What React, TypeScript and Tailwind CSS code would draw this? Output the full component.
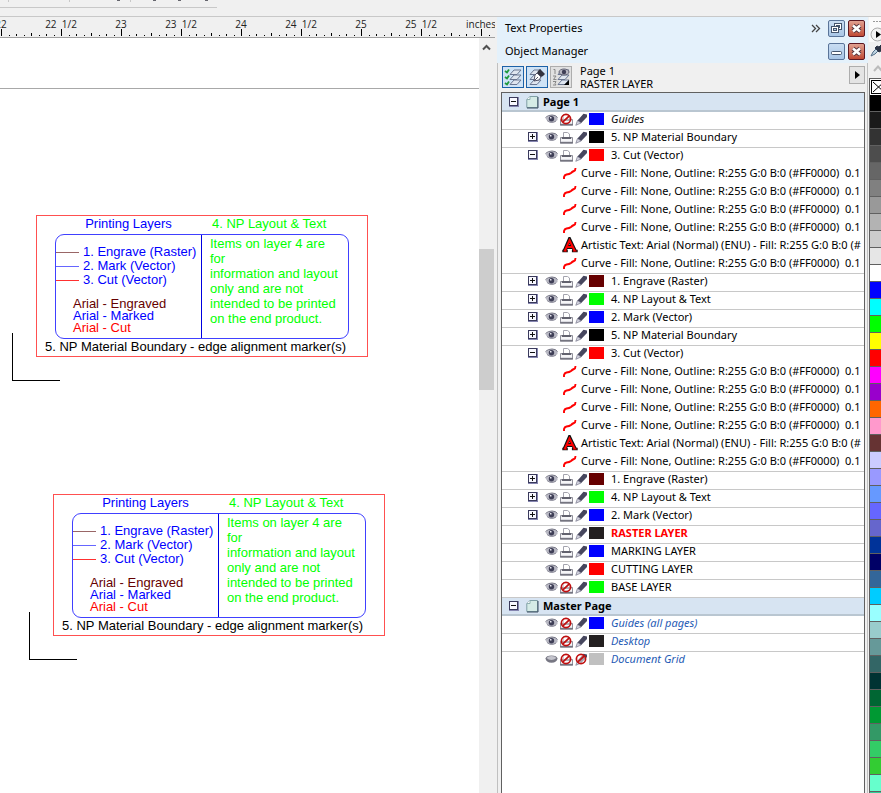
import React from "react";

type LayerRow = {
  kind: "layer";
  name: string;
  color: string;
  expander?: "plus" | "minus";
  hidden?: boolean;
  noPrint?: boolean;
  locked?: boolean;
  tone?: "guide" | "active" | "master";
  line?: boolean;
};
type ObjectRow = { kind: "curve" | "text"; name: string; line?: boolean };
type PageRow = { kind: "page"; name: string };
type Row = LayerRow | ObjectRow | PageRow;

const curveName = "Curve - Fill: None, Outline: R:255 G:0 B:0 (#FF0000)  0.1";
const textName = "Artistic Text: Arial (Normal) (ENU) - Fill: R:255 G:0 B:0 (#";

const curve: ObjectRow = { kind: "curve", name: curveName };
const plateLayers: Row[] = [
  { kind: "layer", name: "5. NP Material Boundary", color: "#000000", expander: "plus", line: true },
  { kind: "layer", name: "3. Cut (Vector)", color: "#ff0000", expander: "minus" },
  curve,
  curve,
  curve,
  curve,
  { kind: "text", name: textName },
  { ...curve, line: true },
  { kind: "layer", name: "1. Engrave (Raster)", color: "#660000", expander: "plus", line: true },
  { kind: "layer", name: "4. NP Layout & Text", color: "#00ff00", expander: "plus", line: true },
  { kind: "layer", name: "2. Mark (Vector)", color: "#0000ff", expander: "plus", line: true },
];

const rows: Row[] = [
  { kind: "page", name: "Page 1" },
  { kind: "layer", name: "Guides", color: "#0000ff", noPrint: true, tone: "guide", line: true },
  ...plateLayers,
  ...plateLayers,
  { kind: "layer", name: "RASTER LAYER", color: "#231f20", tone: "active", line: true },
  { kind: "layer", name: "MARKING LAYER", color: "#0000ff", line: true },
  { kind: "layer", name: "CUTTING LAYER", color: "#ff0000", line: true },
  { kind: "layer", name: "BASE LAYER", color: "#00ff00", noPrint: true, line: true },
  { kind: "page", name: "Master Page" },
  { kind: "layer", name: "Guides (all pages)", color: "#0000ff", noPrint: true, tone: "master", line: true },
  { kind: "layer", name: "Desktop", color: "#231f20", noPrint: true, tone: "master", line: true },
  { kind: "layer", name: "Document Grid", color: "#c0c0c0", hidden: true, noPrint: true, locked: true, tone: "master" },
];

const palette = [
  "#000000", "#1a1a1a", "#333333", "#4d4d4d", "#666666", "#808080", "#999999", "#b3b3b3", "#cccccc", "#e6e6e6",
  "#ffffff", "#0000ff", "#00ffff", "#00ff00", "#ffff00", "#ff0000", "#ff00ff", "#9900cc", "#ff6600", "#ff99cc",
  "#663333", "#ccccff", "#9999ff", "#6699ff", "#6666ff", "#6666cc", "#003399", "#000066", "#336699", "#00ccff",
  "#99ffff", "#99cccc", "#669999", "#336666", "#003333", "#006633", "#009933", "#339966", "#33cc66", "#33cc33",
  "#66ffcc", "#33cc99",
];

const toneClass = {
  guide: "italic text-[#111]",
  active: "font-bold text-[#f00]",
  master: "italic text-[#1f5bb5]",
};

/* ---------- icons ---------- */

function Eye({ closed }: { closed?: boolean }) {
  return (
    <svg width="13" height="10" viewBox="0 0 13 10">
      {closed ? (
        <>
          <path d="M.5 4.500Q1 1.500 6.500 1.500Q12 1.500 12.500 4.500Q12 8.500 6.500 8.800Q1 8.500 .5 4.500Z" fill="#777783" />
          <path d="M1.500 4Q3 2 6.500 2Q10 2 11.500 4Q9 6 6.500 6Q3.500 6 1.500 4Z" fill="#c4c4cc" />
        </>
      ) : (
        <>
          <path d="M.5 4.500Q3 1 7 1Q11 1 12.500 3.500V6Q10 9 6.500 8.800Q3 8.500 .5 4.500Z" fill="#b9b9c4" />
          <path d="M.5 3.500Q3 1 7 1Q11 1 12.500 3.500" fill="none" stroke="#777786" />
          <path d="M2 6.500Q6.500 10 11 7" fill="none" stroke="#8a8a98" />
          <circle cx="6.500" cy="4.700" r="2.700" fill="#3f3f57" />
          <rect x="5" y="3" width="1.500" height="1.500" fill="#e8e8f0" />
        </>
      )}
    </svg>
  );
}

function Ban() {
  return (
    <>
      <circle cx="6" cy="6" r="4.600" fill="#fff" fillOpacity=".5" stroke="#c01010" strokeWidth="1.700" />
      <path d="M2.900 8.800L9.200 3" stroke="#c01010" strokeWidth="1.700" />
    </>
  );
}

function Printer({ off }: { off?: boolean }) {
  return (
    <svg width="13" height="13" viewBox="0 0 13 13">
      <path d="M3.500 6.500V1.500H7.500L9.500 3V6.500" fill="#fff" stroke="#a4a4ae" />
      <path d="M.5 12V6.500H12.500V12Z" fill="#dcdce2" stroke="#90909a" />
      <rect x="2" y="6" width="9" height="2" fill="#62626e" />
      <rect x="1" y="8" width="11" height="2" fill="#f6f6f8" />
      <rect x="0" y="11" width="13" height="1.500" fill="#757580" />
      {off && <Ban />}
    </svg>
  );
}

function Pencil({ off }: { off?: boolean }) {
  return (
    <svg width="13" height="13" viewBox="0 0 13 13">
      <path d="M8.500 .8L12 1.500V4L6 10.200L2.500 7.500Z" fill="#47475e" />
      <path d="M2.500 7.500L6 10L.8 12.300Z" fill="#d4d4e0" stroke="#77778b" strokeWidth=".7" />
      {off && <Ban />}
    </svg>
  );
}

function PageIcon() {
  return (
    <svg width="13" height="14" viewBox="0 0 13 14">
      <path d="M4 1.500H11.500V12.500H.8V4.500Z" fill="#d5ebe6" stroke="#7f9fa5" />
      <path d="M.8 4.500H4V1.500" fill="#fff" stroke="#8fb0b0" />
      <path d="M12 2V13H1" fill="none" stroke="#3d4d60" />
    </svg>
  );
}

function CurveIcon() {
  return (
    <svg width="14" height="13" viewBox="0 0 14 13">
      <path d="M1 12V10Q1.500 8 3.500 7.500Q6.500 7.300 8 6Q9.500 4.500 11 4Q12.500 3.500 12.500 1" fill="none" stroke="#f00" strokeWidth="1.900" />
    </svg>
  );
}

function LetterIcon() {
  return (
    <svg width="16" height="16" viewBox="0 0 16 16">
      <path d="M2.500 14L7.500 2.500L13 14M4.500 10H11.500" fill="none" stroke="#111" strokeWidth="3.800" />
      <path d="M.3 14H5.800M9.900 14H15.700" stroke="#111" strokeWidth="2.600" />
      <path d="M2.800 14L7.500 3.300L12.800 14M5 10H11" fill="none" stroke="#f00" strokeWidth="2" />
      <path d="M1.500 14H4.800M10.900 14H14.600" stroke="#f00" strokeWidth="1" />
    </svg>
  );
}

function Layers({ x = 5 }: { x?: number }) {
  return (
    <g fill="#dfe6f0" stroke="#6a7691">
      {[13, 8, 3].map((y) => (
        <path key={y} d={`M${x} ${y + 4.5}L${x + 4} ${y}H${x + 11}L${x + 7} ${y + 4.5}Z`} />
      ))}
    </g>
  );
}

function Expander({ state, label }: { state: "plus" | "minus"; label: string }) {
  return (
    <button aria-label={`Toggle ${label}`} className="block h-[10px] w-[10px] shrink-0">
      <svg width="10" height="10" viewBox="0 0 10 10" shapeRendering="crispEdges">
        <rect width="10" height="10" fill="#8585b0" />
        <rect width="9" height="9" fill="#3a3a5c" />
        <rect x="1" y="1" width="7" height="7" fill="#f8f8ff" />
        <rect x="2" y="4" width="5" height="1" fill="#111" />
        {state === "plus" && <rect x="4" y="2" width="1" height="5" fill="#111" />}
      </svg>
    </button>
  );
}

/* ---------- ruler and drawing ---------- */

const rulerLabels = ["22", "22 1/2", "23", "23 1/2", "24", "24 1/2", "25", "25 1/2", "inches"];
const tickOffsets = [
  [0, 7], [8, 1], [15, 2], [23, 1], [30, 3], [38, 1], [45, 2], [53, 1],
];

function Ruler() {
  return (
    <div className="h-[21px] overflow-hidden border-b border-[#a0a0a0] pt-px">
      <div className="-ml-[29px] flex h-[11px] text-[10px] leading-[13px] text-[#222]">
        {rulerLabels.map((l) => (
          <span key={l} className="w-[60px] shrink-0 whitespace-pre text-center">
            {l.replace(" ", "  ")}
          </span>
        ))}
      </div>
      <svg width="495" height="7" className="block" shapeRendering="crispEdges">
        {rulerLabels.map((l, i) =>
          tickOffsets.map(([dx, h]) => (
            <rect key={l + dx} x={1 + i * 60 + dx} y={7 - h} width="1" height={h} fill="#000" />
          ))
        )}
      </svg>
    </div>
  );
}

function Plate({ place, lead }: { place: string; lead: string }) {
  return (
    <div className={`absolute h-[166px] w-[356px] text-[13px] ${place}`}>
      <div className="absolute bottom-0 left-0 h-[48px] w-[48px] border-b border-l border-black" />
      <section className="ml-6 flex h-[142px] flex-col border border-[#ff5050] pl-[18px] pr-[18px]">
        <div className="flex h-[18px] leading-[16px]">
          <h3 className="w-[147px] text-center text-[#00f]">Printing Layers</h3>
          <h3 className="pl-[10px] text-[#0f0]">4. NP Layout &amp; Text</h3>
        </div>
        <div className="flex h-[105px] rounded-[9px] border border-[#4040ff]">
          <div className="w-[146px] border-r border-[#0000e0] pt-[10px]">
            <ul className="leading-[14px] text-[#00f]">
              {[
                ["1. Engrave (Raster)", "bg-[#996666]"],
                ["2. Mark (Vector)", "bg-[#6666ff]"],
                ["3. Cut (Vector)", lead],
              ].map(([t, c]) => (
                <li key={t} className="flex items-center gap-1 whitespace-nowrap">
                  <span className={`h-px w-[23px] shrink-0 ${c}`} />
                  {t}
                </li>
              ))}
            </ul>
            <ul className="pl-[17px] pt-[11px] leading-[12px]">
              <li className="text-[#660000]">Arial - Engraved</li>
              <li className="text-[#00f]">Arial - Marked</li>
              <li className="text-[#f00]">Arial - Cut</li>
            </ul>
          </div>
          <p className="whitespace-nowrap pl-2 pt-px leading-[15px] text-[#0f0]">
            Items on layer 4 are<br />for<br />information and layout<br />only and are not<br />intended to be printed<br />on the end product.
          </p>
        </div>
        <p className="-mx-[10px] whitespace-nowrap leading-[16px] text-black">
          5. NP Material Boundary - edge alignment marker(s)
        </p>
      </section>
    </div>
  );
}

/* ---------- object manager ---------- */

function TreeRow({ row }: { row: Row }) {
  if (row.kind === "page") {
    return (
      <li className="flex h-[18px] items-center border-b-2 border-[#b9c6d1] bg-[#d7e4f2] pl-[7px] font-bold first:h-[19px]">
        <Expander state="minus" label={row.name} />
        <span className="ml-[7px] mr-1">
          <PageIcon />
        </span>
        {row.name}
      </li>
    );
  }
  const line = row.line ? "border-[#c8c8c8]" : "border-transparent";
  if (row.kind !== "layer") {
    return (
      <li className={`flex h-[18px] items-center border-b pb-[3px] pl-[60px] ${line}`}>
        <span className="flex w-[19px] shrink-0 justify-start">
          {row.kind === "curve" ? <span className="pl-px"><CurveIcon /></span> : <LetterIcon />}
        </span>
        <span className="whitespace-pre">{row.name}</span>
      </li>
    );
  }
  return (
    <li className={`flex h-[18px] items-center border-b pb-[3px] pl-[26px] ${line}`}>
      <span className="w-[17px] shrink-0">{row.expander && <Expander state={row.expander} label={row.name} />}</span>
      <span className="flex shrink-0 items-center gap-[2px]">
        <Eye closed={row.hidden} />
        <Printer off={row.noPrint} />
        <Pencil off={row.locked} />
      </span>
      <span className="ml-px mr-[7px] h-3 w-[15px] shrink-0" style={{ backgroundColor: row.color }} />
      <span className={`whitespace-nowrap ${row.tone ? toneClass[row.tone] : ""}`}>{row.name}</span>
    </li>
  );
}

function TitleButton({ kind }: { kind: "restore" | "minimize" | "close" }) {
  const close = kind === "close";
  return (
    <button
      aria-label={kind}
      className={`h-[17px] w-[17px] rounded-[2px] border ${
        close
          ? "border-[#5c1822] bg-linear-to-b from-[#e0a090] to-[#c04a35]"
          : "border-[#5a7499] bg-linear-to-b from-[#c9ddf2] to-[#a9c6e6]"
      }`}
    >
      <svg width="15" height="15" viewBox="0 0 15 15" className="block">
        {kind === "restore" && (
          <g fill="#fff" stroke="#44546c">
            <rect x="5.500" y="2.500" width="7" height="6" />
            <rect x="7.500" y="4.500" width="3" height="2" fill="#b9d0ea" />
            <rect x="2.500" y="5.500" width="7" height="6" />
            <rect x="4.500" y="7.500" width="3" height="2" fill="#b9d0ea" />
          </g>
        )}
        {kind === "minimize" && <rect x="2.500" y="7.500" width="10" height="3" rx="1" fill="#fff" stroke="#44546c" />}
        {close && (
          <>
            <path d="M4 4.500L11 10.500M11 4.500L4 10.500" stroke="#54343c" strokeWidth="4.500" />
            <path d="M4 4.500L11 10.500M11 4.500L4 10.500" stroke="#fff" strokeWidth="2.600" />
          </>
        )}
      </svg>
    </button>
  );
}

function ObjectManager() {
  return (
    <aside className="flex min-h-0 w-[371px] shrink-0 flex-col font-['Noto_Sans','Open_Sans',sans-serif] text-[11px] text-black">
      <header className="bg-[#e4f1fb] pl-2 pr-[3px]">
        <div className="flex h-[23px] items-center gap-[3px]">
          <h2 className="flex-1">Text Properties</h2>
          <svg width="10" height="9" viewBox="0 0 10 9" className="mr-[4px]">
            <path d="M1 1L4.500 4.500L1 8M5 1L8.500 4.500L5 8" fill="none" stroke="#444" strokeWidth="1.300" />
          </svg>
          <TitleButton kind="restore" />
          <TitleButton kind="close" />
        </div>
        <div className="flex h-[23px] items-center gap-[3px]">
          <h2 className="flex-1">Object Manager</h2>
          <TitleButton kind="minimize" />
          <TitleButton kind="close" />
        </div>
      </header>
      <div className="flex min-h-0 flex-1 flex-col border-x border-[#c0c0c0] pl-[3px] pr-[2px]">
        <div className="flex h-[29px] shrink-0 items-start gap-[2px] pl-px pt-[3px]">
          <button aria-label="Show object properties" className="h-[22px] w-[22px] border border-[#1c62a8] bg-[#cfe3f6]">
            <svg width="20" height="20" viewBox="0 0 20 20">
              <Layers x={7} />
              <path d="M2 4L4 5.500L6 2.500M2 10L4 11.500L6 8.500M2 16L4 17.500L6 14.500" fill="none" stroke="#1f9a3c" strokeWidth="1.800" />
            </svg>
          </button>
          <button aria-label="Edit across layers" className="h-[22px] w-[22px] border border-[#1c62a8] bg-[#cfe3f6]">
            <svg width="20" height="20" viewBox="0 0 20 20">
              <Layers x={3} />
              <path d="M11 4L13 2L18 7L16 9L14 10L10 6Z" fill="#33333f" />
              <path d="M10 6L14 10L12 13L7 14L8 8Z" fill="#fff" stroke="#55556a" />
              <path d="M7 14L11 10" stroke="#55556a" />
            </svg>
          </button>
          <button aria-label="Layer manager view" className="h-[22px] w-[22px] border border-[#adadad] bg-[#e1e1e1]">
            <svg width="20" height="20" viewBox="0 0 20 20">
              <Layers x={7} />
              <path d="M2.500 2.500H4V7M2 9H5L2.500 12.500H5.500M2 14.500H5L4 16.500L5 18H2" fill="none" stroke="#888" />
              <ellipse cx="13" cy="5" rx="5" ry="3" fill="#b9b9c4" stroke="#666677" />
              <circle cx="13" cy="5" r="2.200" fill="#3f3f57" />
              <path d="M18 13V18H13Z" fill="#000" />
            </svg>
          </button>
          <p className="-mt-[2px] flex-1 pl-[6px] leading-[13px]">
            Page 1<br />RASTER LAYER
          </p>
          <button aria-label="Object manager options" className="flex h-[18px] w-4 items-center justify-center border border-[#adadad] bg-[#e4e4e4]">
            <svg width="5" height="8" viewBox="0 0 5 8">
              <path d="M0 0L5 4L0 8Z" fill="#000" />
            </svg>
          </button>
        </div>
        <ul className="min-h-0 flex-1 overflow-hidden border border-b-0 border-[#606060] bg-white leading-[16px]">
          {rows.map((row, i) => (
            <TreeRow key={i} row={row} />
          ))}
        </ul>
      </div>
    </aside>
  );
}

function ColorPalette() {
  return (
    <nav aria-label="Color palette" className="flex w-[13px] shrink-0 flex-col overflow-hidden pl-px">
      <div className="h-[61px] shrink-0 overflow-hidden">
        <svg width="20" height="61" viewBox="0 0 20 61">
          <path d="M0 0H20V25H0Z" fill="#fafafa" />
          <path d="M4 4.500H6M7 4.500H9M10 4.500H12" stroke="#999" />
          <circle cx="8.500" cy="17.500" r="6.500" fill="#f2f2f2" stroke="#a8a8a8" />
          <path d="M7 14L12 17.500L7 21Z" fill="#000" />
          <path d="M2 39L4 35L8 31L10 33L6 37Z" fill="#bdd3e0" stroke="#54708a" />
          <path d="M6 31L8 29L10 30L12 28V34L10 35Z" fill="#2d3445" stroke="#2d3445" />
          <path d="M5 54L9 49.500L13 54" fill="none" stroke="#bbb" strokeWidth="2" />
        </svg>
      </div>
      <button aria-label="No color" className="h-[17px] shrink-0 overflow-hidden border-l border-t border-[#606060] bg-white">
        <svg width="20" height="16" viewBox="0 0 20 16" className="block">
          <rect x="1.500" y="1.500" width="14" height="13" fill="#fff" stroke="#000" />
          <path d="M3 3L14 13M14 3L3 13" stroke="#000" />
        </svg>
      </button>
      {palette.map((c) => (
        <button
          key={c}
          aria-label={c}
          className="h-[17px] shrink-0 border-b border-l border-[#606060]"
          style={{ backgroundColor: c }}
        />
      ))}
    </nav>
  );
}

export default function App() {
  return (
    <div className="flex h-screen flex-col overflow-hidden bg-[#f0f0f0] font-['Open_Sans','Noto_Sans',sans-serif]">
      <div className="h-[17px] shrink-0 border-b border-[#c8c8c8]">
        <svg width="217" height="8" className="block" shapeRendering="crispEdges">
          <path d="M8.500 0V2M69.500 0V2M130.500 0V2" stroke="#c8c8c8" />
          <path d="M117 .5H120M153 .5H156M178 .5H181M205 .5H208" stroke="#66666e" />
          <rect y="7" width="217" height="1" fill="#c8c8c8" />
        </svg>
      </div>
      <div className="flex min-h-0 flex-1">
        <main className="mr-[2px] flex min-w-0 flex-1 flex-col">
          <Ruler />
          <div className="flex min-h-0 flex-1">
            <div className="relative min-w-0 flex-1 overflow-hidden bg-white font-['Liberation_Sans',Arial,sans-serif]">
              <div className="h-[51px] border-b border-[#a8a8a8]" />
              <Plate place="left-3 top-[177px]" lead="bg-[#ff3030]" />
              <Plate place="left-[29px] top-[456px]" lead="bg-[#ff3030]" />
            </div>
            <div className="mr-px flex w-[15px] flex-col items-center">
              <svg width="9" height="7" viewBox="0 0 9 7" className="mt-[6px]">
                <path d="M1 5.500L4.500 2L8 5.500" fill="none" stroke="#505050" strokeWidth="2" />
              </svg>
              <div className="mt-[198px] h-[141px] w-full bg-[#cdcdcd]" />
            </div>
          </div>
        </main>
        <ObjectManager />
        <ColorPalette />
      </div>
    </div>
  );
}
